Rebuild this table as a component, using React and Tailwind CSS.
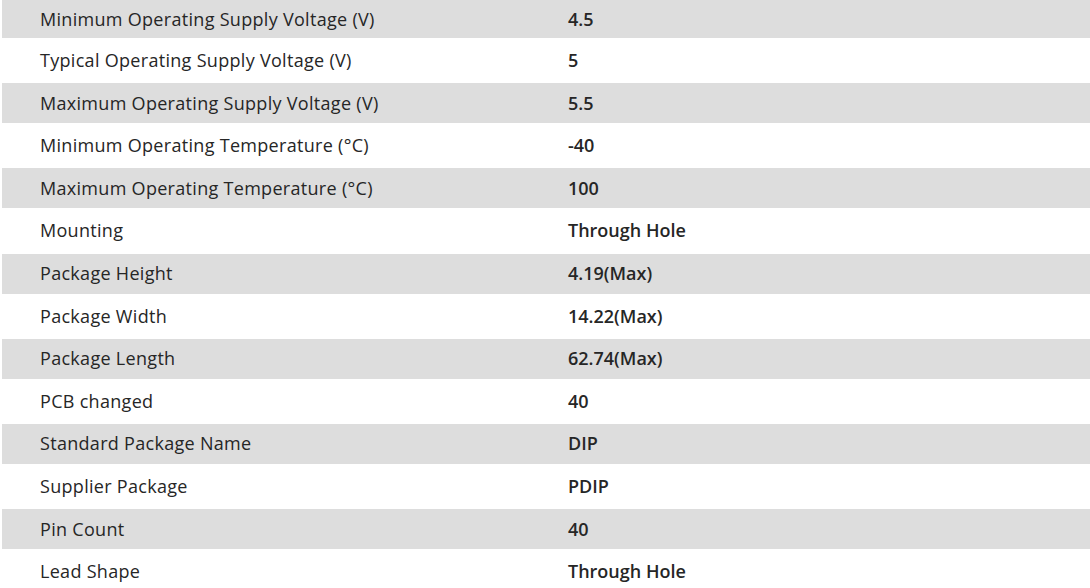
import React from "react";

const SPECS = [
  ["Minimum Operating Supply Voltage (V)", "4.5"],
  ["Typical Operating Supply Voltage (V)", "5"],
  ["Maximum Operating Supply Voltage (V)", "5.5"],
  ["Minimum Operating Temperature (°C)", "-40"],
  ["Maximum Operating Temperature (°C)", "100"],
  ["Mounting", "Through Hole"],
  ["Package Height", "4.19(Max)"],
  ["Package Width", "14.22(Max)"],
  ["Package Length", "62.74(Max)"],
  ["PCB changed", "40"],
  ["Standard Package Name", "DIP"],
  ["Supplier Package", "PDIP"],
  ["Pin Count", "40"],
  ["Lead Shape", "Through Hole"],
];

const App = () => {
  return (
    <div
      className="w-[1090px] h-[588px] overflow-hidden bg-white pl-[2px] text-[#262626]"
      style={{ fontFamily: '"Open Sans", "Noto Sans", Arial, sans-serif' }}
    >
      {SPECS.map(([label, value], i) => {
        const gray = i % 2 === 0;
        return (
          <div
            key={label}
            className={
              "flex items-center text-[18px] " +
              (gray ? "bg-[#dddddd] " : "bg-white ") +
              (i === 0 ? "h-[38px]" : gray ? "h-[40px]" : "h-[45.2px]")
            }
          >
            <div className="w-[528px] pl-[38px] tracking-[0.3px]">{label}</div>
            <div className="pl-[38px] font-semibold">{value}</div>
          </div>
        );
      })}
    </div>
  );
};

export default App;
